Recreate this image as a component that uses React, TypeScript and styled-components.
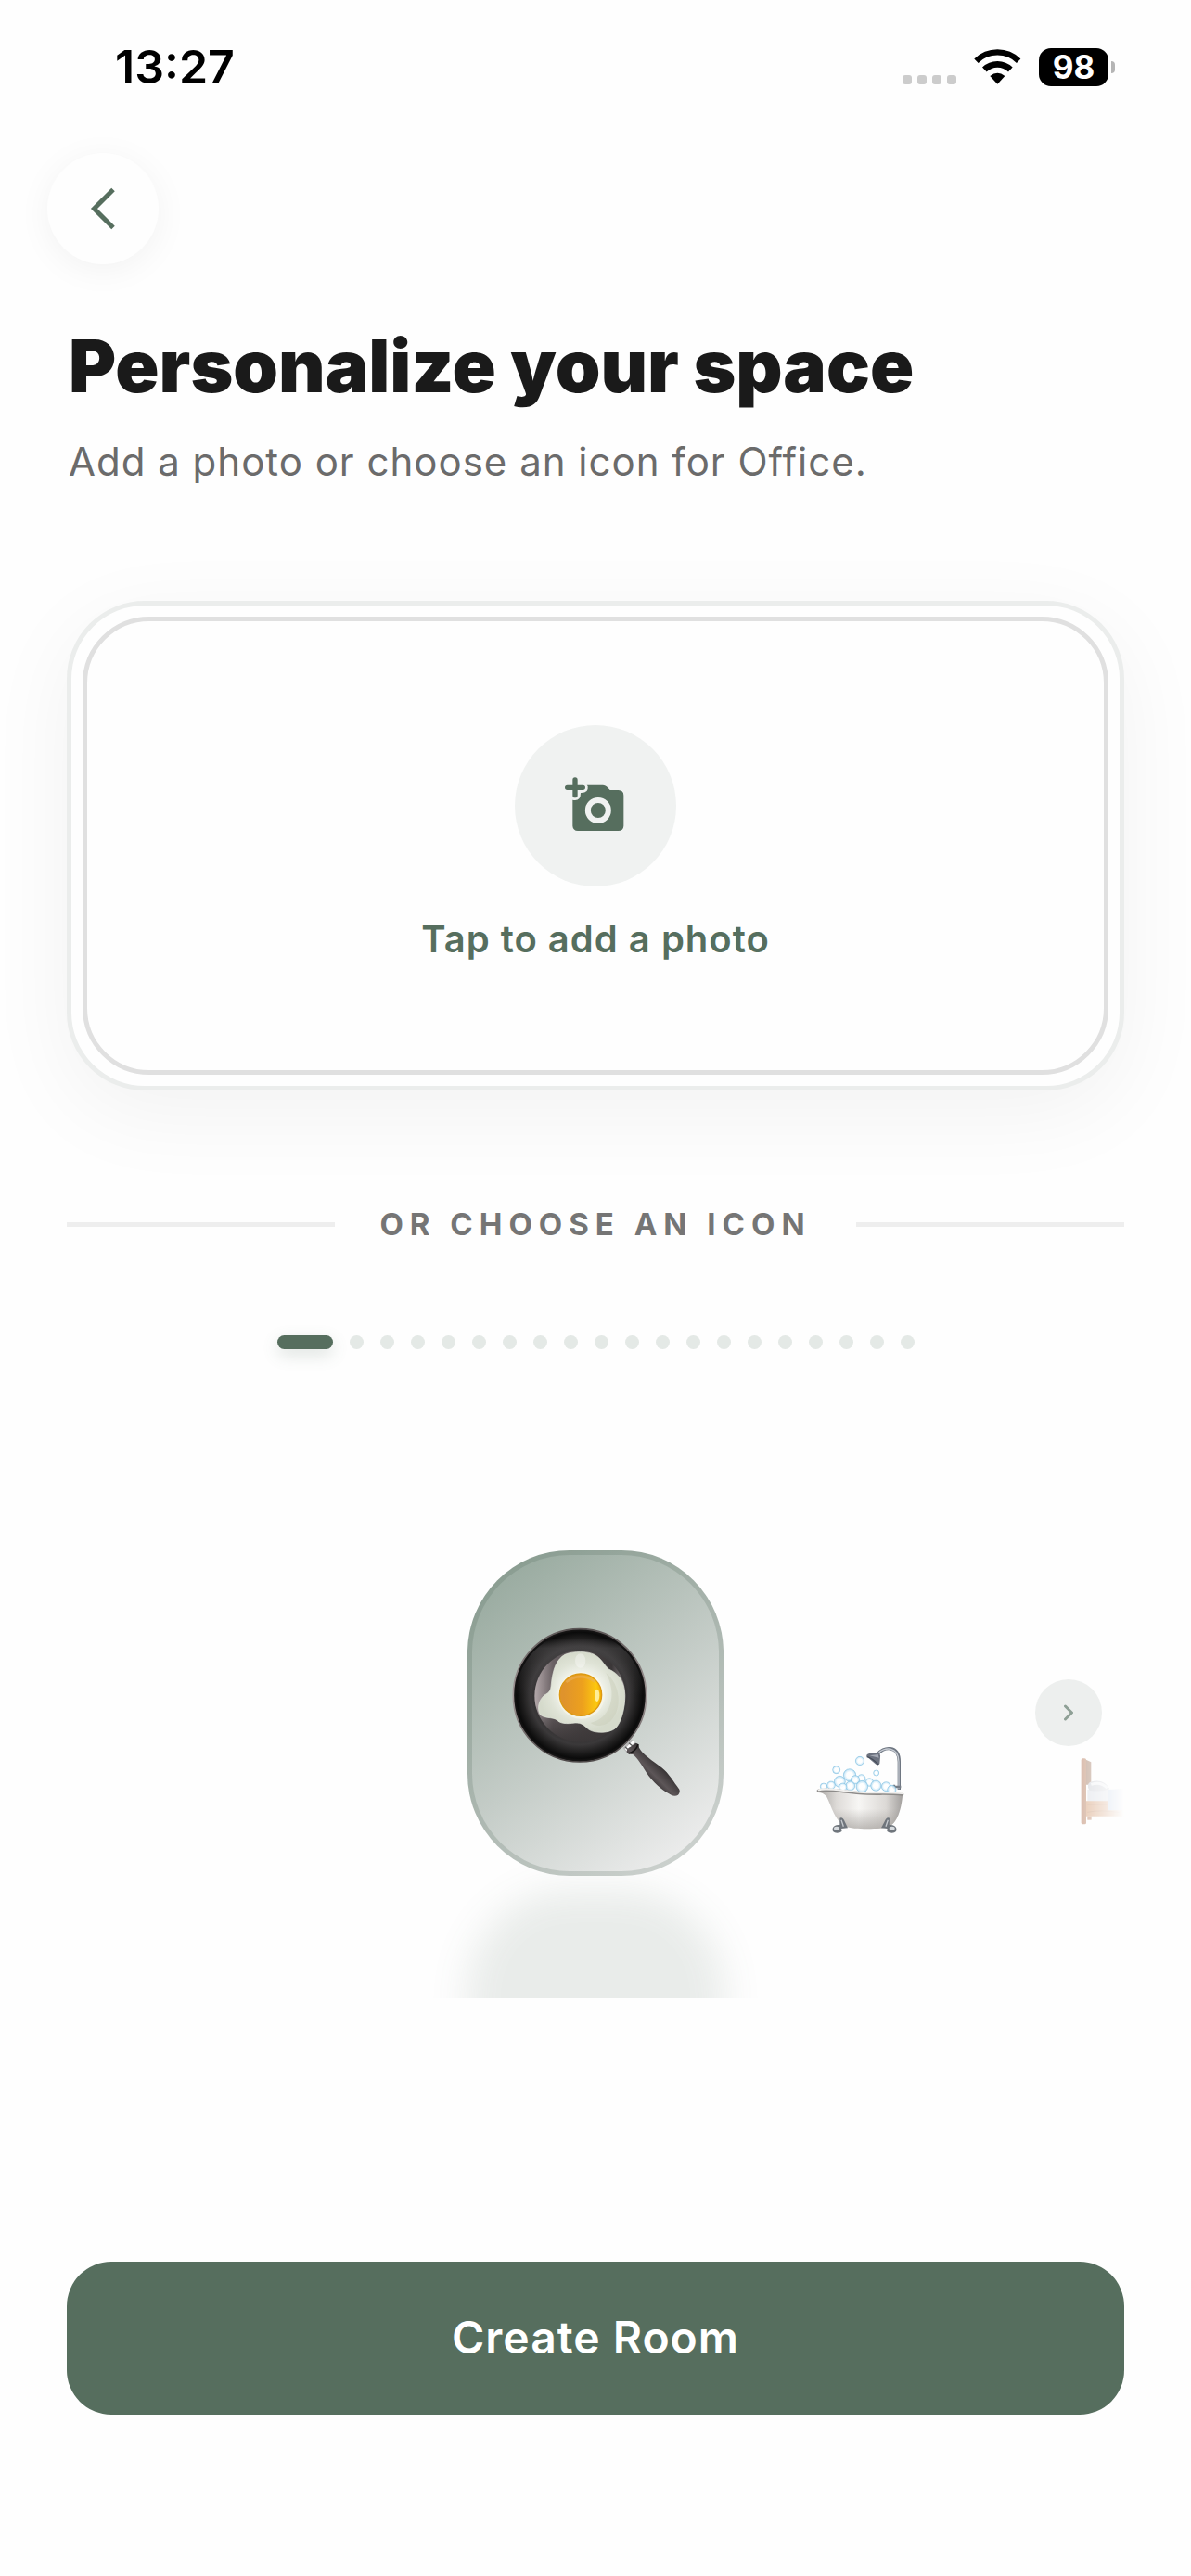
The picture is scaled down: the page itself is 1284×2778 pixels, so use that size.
import React, { useState } from "react";
import styled, { createGlobalStyle } from "styled-components";

const colors = {
  page: "#fefefe",
  ink: "#1a1a1a",
  muted: "#6b6b6b",
  label: "#757575",
  green: "#566e5e",
  line: "#eeeeee",
};

const GlobalStyle = createGlobalStyle`
  *, *::before, *::after { box-sizing: border-box; }
  body {
    margin: 0;
    background: ${colors.page};
    color: ${colors.ink};
    font-family: Inter, "Liberation Sans", sans-serif;
  }
  button {
    margin: 0;
    padding: 0;
    border: 0;
    background: none;
    font: inherit;
    color: inherit;
    cursor: pointer;
  }
  svg { display: block; }
`;

const Screen = styled.div`
  min-height: 100vh;
  display: flex;
  flex-direction: column;
  overflow: hidden;
`;

const StatusBar = styled.div`
  display: flex;
  align-items: center;
  justify-content: space-between;
  height: 144px;
  padding: 0 82px 0 124px;
  color: #000;
`;

const Clock = styled.time`
  font-size: 50px;
  font-weight: 600;
  line-height: 60px;
`;

const StatusIcons = styled.div`
  display: flex;
  align-items: center;
  gap: 19px;
`;

const SignalDots = styled.div`
  display: flex;
  gap: 6px;
  padding-top: 27px;
`;

const SignalDot = styled.span`
  width: 10px;
  height: 10px;
  border-radius: 3px;
  background: #cccccc;
`;

const Battery = styled.div`
  display: flex;
  align-items: center;
  gap: 3px;
`;

const BatteryBody = styled.span`
  display: grid;
  place-items: center;
  width: 75px;
  height: 41px;
  border-radius: 13px;
  background: #000;
  color: #fff;
  font-size: 35px;
  font-weight: 700;
  line-height: 41px;
`;

const BatteryTip = styled.span`
  width: 4px;
  height: 13px;
  border-radius: 0 4px 4px 0;
  background: #b5b5b5;
`;

const TopBar = styled.header`
  padding: 21px 51px 0;
`;

const BackButton = styled.button`
  display: grid;
  place-items: center;
  width: 120px;
  height: 120px;
  border-radius: 50%;
  background: ${colors.page};
  box-shadow: 0 6px 36px rgba(0, 0, 0, 0.05);
`;

const Main = styled.main`
  flex: 1;
  display: flex;
  flex-direction: column;
  padding: 60px 72px 174px;
`;

const Intro = styled.div`
  padding: 0 2px;
`;

const Title = styled.h1`
  margin: 0;
  font-size: 78px;
  font-weight: 900;
  line-height: 99px;
`;

const Subtitle = styled.p`
  margin: 24px 0 0;
  color: ${colors.muted};
  font-size: 42px;
  line-height: 60px;
  letter-spacing: 1px;
`;

const PhotoCard = styled.button`
  display: flex;
  margin-top: 120px;
  padding: 12px;
  border: 5px solid #ebedec;
  border-radius: 84px;
  background: ${colors.page};
  box-shadow: 0 24px 96px rgba(0, 0, 0, 0.05);
`;

const PhotoDrop = styled.span`
  flex: 1;
  display: flex;
  flex-direction: column;
  align-items: center;
  justify-content: center;
  gap: 28px;
  min-height: 494px;
  border: 5px solid #e0e0e0;
  border-radius: 72px;
`;

const CameraBadge = styled.span`
  display: grid;
  place-items: center;
  width: 174px;
  height: 174px;
  border-radius: 50%;
  background: #f0f2f1;
`;

const PhotoLabel = styled.span`
  color: ${colors.green};
  font-size: 40px;
  font-weight: 600;
  line-height: 58px;
  letter-spacing: 1px;
`;

const Divider = styled.div`
  display: flex;
  align-items: center;
  gap: 48px;
  margin-top: 119px;
  color: ${colors.label};
  font-size: 33px;
  font-weight: 700;
  line-height: 51px;
  letter-spacing: 7px;

  &::before,
  &::after {
    content: "";
    flex: 1;
    height: 5px;
    background: ${colors.line};
  }
`;

const Pager = styled.div`
  display: flex;
  justify-content: center;
  gap: 18px;
  margin-top: 94px;
`;

const PagerDot = styled.button<{ $active: boolean }>`
  width: ${(p) => (p.$active ? 60 : 15)}px;
  height: 15px;
  border-radius: 8px;
  background: ${(p) => (p.$active ? colors.green : "#e4e9e6")};
  box-shadow: ${(p) => (p.$active ? "0 6px 18px rgba(86, 110, 94, 0.2)" : "none")};
`;

const Carousel = styled.div`
  position: relative;
  margin: 84px 0;
`;

const Track = styled.div`
  display: flex;
  align-items: center;
  height: 616px;
  padding-left: 37.5%;
  overflow: hidden;
  mask-image: linear-gradient(to right, transparent, #000 10%, #000 90%, transparent);
`;

const Slide = styled.button<{ $active: boolean }>`
  flex: 0 0 40%;
  min-width: 0;
  display: flex;
  justify-content: center;
  padding-top: ${(p) => (p.$active ? 0 : 166)}px;
`;

const Tile = styled.span`
  display: grid;
  place-items: center;
  width: 276px;
  height: 351px;
  border: 5px solid rgba(86, 110, 94, 0.22);
  border-radius: 110px;
  background: linear-gradient(142deg, #98aa9f 8%, #c4ccc7 52%, #eeeeee 92%) border-box;
  box-shadow: 0 366px 40px rgba(86, 110, 94, 0.125);
`;

const NextButton = styled.button`
  position: absolute;
  right: 24px;
  top: calc(50% - 36px);
  display: grid;
  place-items: center;
  width: 72px;
  height: 72px;
  border-radius: 50%;
  background: #edefee;
`;

const CreateButton = styled.button`
  margin-top: auto;
  height: 165px;
  padding-bottom: 2px;
  border-radius: 48px;
  background: ${colors.green};
  color: #fff;
  font-size: 48px;
  font-weight: 600;
  line-height: 60px;
  letter-spacing: 1px;
`;

const WifiIcon = () => (
  <svg width="51" height="38" viewBox="331 71 153 114" fill="none" aria-label="Wi-Fi">
    <path d="M338.500 109A98.500 98.500 0 0 1 475.500 109" stroke="#000" strokeWidth="19" />
    <path d="M365 137A60.500 60.500 0 0 1 449 137" stroke="#000" strokeWidth="20" />
    <path d="M383 158Q407 138 431 158L407 184Z" fill="#000" />
  </svg>
);

const BackIcon = () => (
  <svg width="28" height="46" viewBox="0 0 28 46" fill="none" aria-hidden="true">
    <path d="M25 2.500L4.500 23L25 43.500" stroke={colors.green} strokeWidth="5" />
  </svg>
);

const NextIcon = () => (
  <svg width="10" height="18" viewBox="0 0 10 18" fill="none" aria-hidden="true">
    <path d="M1.500 2L8.500 9L1.500 16" stroke="#8fa096" strokeWidth="3" strokeLinecap="round" strokeLinejoin="round" />
  </svg>
);

const CameraIcon = () => (
  <svg width="66" height="66" viewBox="207 226 198 198" aria-hidden="true">
    <path
      fill={colors.green}
      d="M278 258H330Q337 258 342 263L353 274H380Q397 275 397 291V390Q396 406 380 406H249Q233 405 232 390V306Q258 312 258 283Q284 284 281 262Z"
    />
    <circle cx="314.500" cy="340" r="33" fill={colors.green} stroke="#f0f2f1" strokeWidth="18" />
    <path d="M240 241V291M215 266H265" stroke={colors.green} strokeWidth="16" strokeLinecap="round" />
  </svg>
);

const PanIcon = () => (
  <svg width="210" height="210" viewBox="-9 3 630 630" aria-hidden="true">
    <defs>
      <radialGradient id="pan-rim">
        <stop offset="0.660" stopColor="#343233" />
        <stop offset="0.740" stopColor="#3b393a" />
        <stop offset="0.860" stopColor="#1f1e1e" />
        <stop offset="0.950" stopColor="#0b0b0b" />
        <stop offset="1" stopColor="#1b1919" />
      </radialGradient>
      <linearGradient id="pan-edge" x1="0" y1="0" x2="0" y2="1">
        <stop offset="0" stopColor="#5b5555" />
        <stop offset="0.500" stopColor="#a59b9b" />
        <stop offset="1" stopColor="#4c4747" />
      </linearGradient>
      <linearGradient id="pan-top" x1="0" y1="0" x2="0" y2="1">
        <stop offset="0.050" stopColor="#4a4849" stopOpacity="0" />
        <stop offset="0.130" stopColor="#4a4849" stopOpacity="0.600" />
        <stop offset="0.500" stopColor="#4a4849" stopOpacity="0" />
      </linearGradient>
      <linearGradient id="pan-base" x1="0" y1="0" x2="1" y2="0">
        <stop offset="0" stopColor="#b3a8aa" />
        <stop offset="0.200" stopColor="#6a6164" />
        <stop offset="0.500" stopColor="#4e4849" />
        <stop offset="0.850" stopColor="#3b3738" />
        <stop offset="1" stopColor="#8b8385" />
      </linearGradient>
      <linearGradient id="pan-base-fade" x1="0" y1="0" x2="0" y2="1">
        <stop offset="0.600" stopColor="#3b3738" stopOpacity="0" />
        <stop offset="1" stopColor="#3b3738" />
      </linearGradient>
      <radialGradient id="egg-white">
        <stop offset="0.450" stopColor="#f3f5ee" />
        <stop offset="0.750" stopColor="#dfe3d6" />
        <stop offset="1" stopColor="#d5dacb" />
      </radialGradient>
      <linearGradient id="egg-yolk" x1="0.100" y1="0.500" x2="1" y2="0.500">
        <stop offset="0" stopColor="#df932c" />
        <stop offset="0.500" stopColor="#eda11d" />
        <stop offset="0.850" stopColor="#fcc80f" />
        <stop offset="1" stopColor="#f2ad05" />
      </linearGradient>
      <linearGradient id="pan-handle" x1="0.300" y1="0.700" x2="0.650" y2="0.350">
        <stop offset="0" stopColor="#252223" />
        <stop offset="0.450" stopColor="#5d5658" />
        <stop offset="1" stopColor="#2b2829" />
      </linearGradient>
    </defs>
    <path d="M394 432L422 403L440 422L412 452Z" fill="#b9b9b9" />
    <path d="M404 438L430 411" stroke="#fff" strokeWidth="8" />
    <path d="M402 428L412 438M414 416L426 426" stroke="#5b5b5b" strokeWidth="4" />
    <path
      fill="url(#pan-handle)"
      d="M407 445Q408 432 420 428L436 416Q447 417 447 431C460 455 490 472 520 496C544 515 557 540 577 566Q581 574 573 584Q563 590 551 584C520 569 491 543 470 511C456 489 443 465 427 453Q411 455 407 445Z"
    />
    <path d="M413 450Q437 443 444 420" fill="none" stroke="#171515" strokeWidth="5" />
    <circle cx="255" cy="262" r="215" fill="url(#pan-rim)" stroke="url(#pan-edge)" strokeWidth="5" />
    <circle cx="255" cy="262" r="206" fill="url(#pan-top)" />
    <circle cx="256" cy="264" r="147" fill="url(#pan-base)" />
    <circle cx="256" cy="264" r="149" fill="url(#pan-base-fade)" />
    <path
      fill="url(#egg-white)"
      stroke="#e3e7dc"
      strokeWidth="2"
      d="M163 225C168 175 181 145 207 130C235 118 281 119 302 130C326 142 332 163 349 177C382 193 399 215 401 260C402 310 387 352 371 368C350 386 304 385 285 373C268 359 262 350 240 351C211 355 191 353 182 342C166 331 139 338 126 323C116 302 124 276 140 262C160 250 161 245 163 225Z"
    />
    <path d="M340 190C386 225 395 305 355 345C331 365 306 362 290 351C356 337 378 258 340 190Z" fill="#c9ceb9" opacity="0.500" />
    <ellipse cx="257" cy="150" rx="17" ry="23" fill="#fff" opacity="0.350" />
    <circle cx="260" cy="262" r="76" fill="#f8f7e9" opacity="0.700" />
    <circle cx="258" cy="260" r="68" fill="url(#egg-yolk)" stroke="#dc9812" strokeWidth="4" />
    <ellipse cx="311" cy="262" rx="8" ry="20" fill="#fff6b0" opacity="0.850" />
    <path d="M211 219Q256 184 305 218" fill="none" stroke="#e9b15c" strokeWidth="8" opacity="0.600" />
  </svg>
);

const bubbles = [
  [261, 355, 14], [185, 384, 12], [314, 394, 9], [228, 401, 20], [196, 422, 18],
  [266, 412, 13], [246, 416, 14], [292, 424, 13], [144, 438, 11], [168, 434, 13],
  [230, 436, 15], [268, 438, 19], [313, 435, 17], [346, 438, 15], [206, 440, 13], [364, 448, 14],
];

const TubIcon = () => (
  <svg width="95" height="95" viewBox="120 307 285 285" aria-hidden="true">
    <defs>
      <radialGradient id="tub-bubble">
        <stop offset="0.500" stopColor="#fff" stopOpacity="0.900" />
        <stop offset="0.850" stopColor="#cbe8f8" stopOpacity="0.900" />
        <stop offset="1" stopColor="#8fc6e4" />
      </radialGradient>
      <linearGradient id="tub-body" x1="0" y1="0" x2="1" y2="0">
        <stop offset="0" stopColor="#a9a6a3" />
        <stop offset="0.220" stopColor="#dedbd8" />
        <stop offset="0.480" stopColor="#f7f6f4" />
        <stop offset="0.800" stopColor="#dcd9d6" />
        <stop offset="1" stopColor="#a29f9d" />
      </linearGradient>
      <linearGradient id="tub-shade" x1="0" y1="0" x2="0" y2="1">
        <stop offset="0.500" stopColor="#9a9692" stopOpacity="0" />
        <stop offset="1" stopColor="#9a9692" stopOpacity="0.600" />
      </linearGradient>
    </defs>
    <path d="M318 334C335 308 388 302 388 358V448" fill="none" stroke="#6f7782" strokeWidth="10" />
    <path d="M320 331C338 309 386 306 387 358V446" fill="none" stroke="#c6cbd3" strokeWidth="4" />
    <path d="M283 341Q281 333 292 331L321 330Q329 334 327 342L325 364Q322 371 313 366Z" fill="#6c727f" />
    <path d="M293 338L320 334L323 345Z" fill="#a3a8b3" />
    <path d="M284 342Q300 345 321 367" fill="none" stroke="#454c59" strokeWidth="4" />
    <path d="M366 439H394M372 432V446" stroke="#777e87" strokeWidth="7" />
    {bubbles.map(([cx, cy, r]) => (
      <circle key={`${cx}-${cy}`} cx={cx} cy={cy} r={r} fill="url(#tub-bubble)" stroke="#86c2e2" strokeWidth="1.500" />
    ))}
    <path d="M126 448C150 440 210 452 260 456C310 460 360 456 400 457C397 500 387 550 357 567C330 577 240 577 214 567C180 550 169 500 153 470Q142 457 126 457Z" fill="url(#tub-body)" />
    <path d="M126 448C150 440 210 452 260 456C310 460 360 456 400 457C397 500 387 550 357 567C330 577 240 577 214 567C180 550 169 500 153 470Q142 457 126 457Z" fill="url(#tub-shade)" />
    <path d="M127 452C150 443 205 455 260 459C310 463 350 458 398 463" fill="none" stroke="#8e8c8a" strokeWidth="10" strokeLinecap="round" />
    <path d="M128 449C150 440 205 452 260 456C310 460 350 455 398 460" fill="none" stroke="#f1f0ee" strokeWidth="6" strokeLinecap="round" />
    <path d="M196 540Q206 535 213 553L222 572L201 574Q209 587 187 588Q170 587 173 573Q178 560 196 562Z" fill="#6f757c" />
    <path d="M357 540Q347 535 340 553L330 572L350 574Q343 587 365 588Q382 587 379 573Q374 560 356 562Z" fill="#6f757c" />
    <ellipse cx="186" cy="573" rx="9" ry="6" fill="#d7dbdf" />
    <ellipse cx="365" cy="573" rx="9" ry="6" fill="#d7dbdf" />
    <path d="M201 546L208 567M352 546L345 567" stroke="#c6cacf" strokeWidth="4" />
  </svg>
);

const BedIcon = () => (
  <svg width="95" height="95" viewBox="974 307 285 285" aria-hidden="true">
    <path d="M988 350L1008 359V432H988Z" fill="#8d5a3b" />
    <rect x="976" y="347" width="16" height="213" rx="5" fill="#a8623c" />
    <path d="M996 448H1250V490H996Z" fill="#cfd4de" />
    <path d="M998 441Q996 424 1010 422Q1050 412 1068 446Q1040 457 1002 450Z" fill="#bcc0c9" />
    <path d="M1008 431Q1040 420 1060 443" fill="none" stroke="#eceef2" strokeWidth="9" />
    <path d="M1062 448Q1150 440 1242 450V516H1062Z" fill="#a3bbdc" />
    <path d="M992 485H1062V515H1242V534H992Z" fill="#c9824f" />
    <path d="M996 496H1060M996 521Q1040 512 1100 522" stroke="#b0693a" strokeWidth="3" fill="none" />
    <rect x="996" y="534" width="13" height="12" fill="#a8623c" />
    <rect x="1242" y="430" width="14" height="130" rx="5" fill="#a8623c" />
  </svg>
);

const PAGE_COUNT = 20;

const slides = [
  { name: "Kitchen", icon: <PanIcon /> },
  { name: "Bathroom", icon: <TubIcon /> },
  { name: "Bedroom", icon: <BedIcon /> },
];

export default function App() {
  const [selected, setSelected] = useState(0);

  return (
    <>
      <GlobalStyle />
      <Screen>
        <StatusBar>
          <Clock>13:27</Clock>
          <StatusIcons>
            <SignalDots>
              {[0, 1, 2, 3].map((i) => (
                <SignalDot key={i} />
              ))}
            </SignalDots>
            <WifiIcon />
            <Battery>
              <BatteryBody>98</BatteryBody>
              <BatteryTip />
            </Battery>
          </StatusIcons>
        </StatusBar>

        <TopBar>
          <BackButton aria-label="Back">
            <BackIcon />
          </BackButton>
        </TopBar>

        <Main>
          <Intro>
            <Title>Personalize your space</Title>
            <Subtitle>Add a photo or choose an icon for Office.</Subtitle>
          </Intro>

          <PhotoCard>
            <PhotoDrop>
              <CameraBadge>
                <CameraIcon />
              </CameraBadge>
              <PhotoLabel>Tap to add a photo</PhotoLabel>
            </PhotoDrop>
          </PhotoCard>

          <Divider>OR CHOOSE AN ICON</Divider>

          <Pager>
            {Array.from({ length: PAGE_COUNT }, (_, i) => (
              <PagerDot
                key={i}
                $active={i === selected}
                aria-label={`Icon ${i + 1}`}
                onClick={() => setSelected(i)}
              />
            ))}
          </Pager>

          <Carousel>
            <Track>
              {slides.map((slide, i) => (
                <Slide
                  key={slide.name}
                  $active={i === selected}
                  aria-label={slide.name}
                  onClick={() => setSelected(i)}
                >
                  {i === selected ? <Tile>{slide.icon}</Tile> : slide.icon}
                </Slide>
              ))}
            </Track>
            <NextButton
              aria-label="Next icon"
              onClick={() => setSelected((selected + 1) % slides.length)}
            >
              <NextIcon />
            </NextButton>
          </Carousel>

          <CreateButton>Create Room</CreateButton>
        </Main>
      </Screen>
    </>
  );
}
